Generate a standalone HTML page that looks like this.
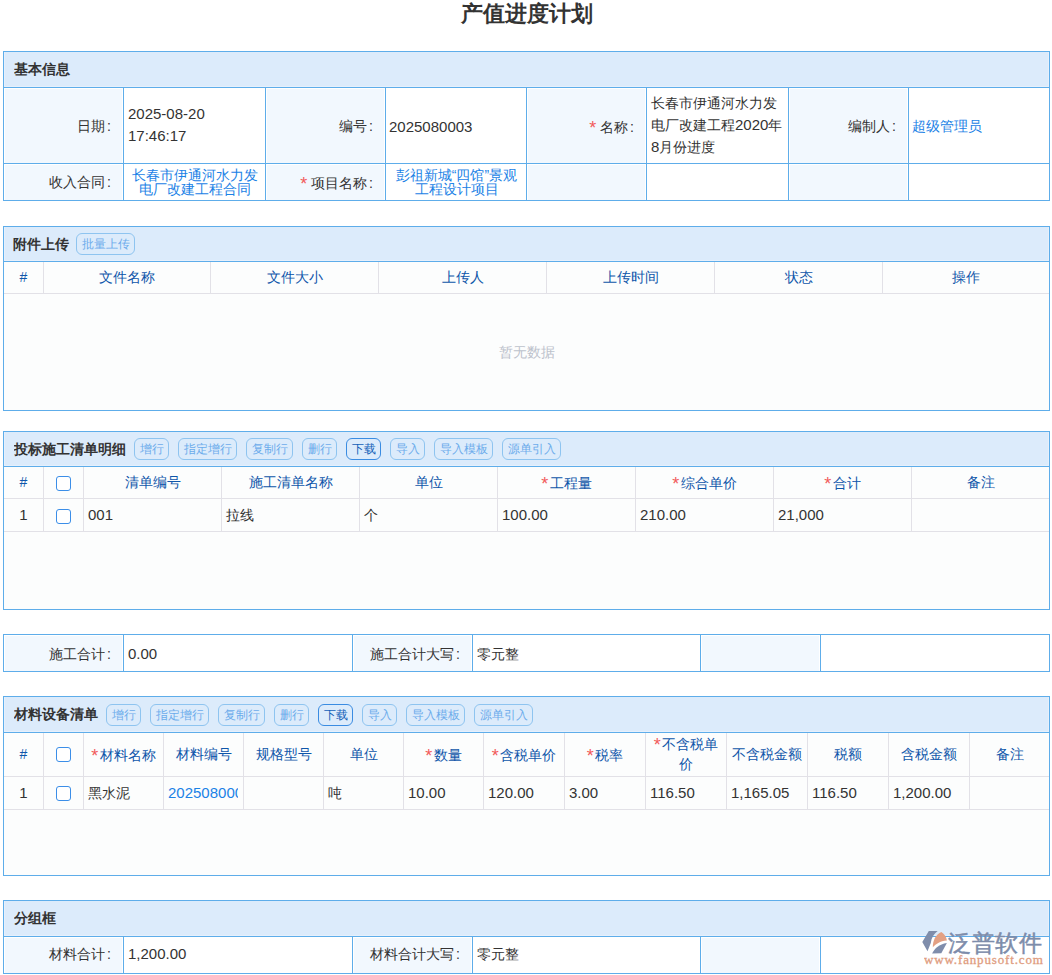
<!DOCTYPE html><html><head><meta charset="utf-8"><style>
html,body{margin:0;padding:0;background:#fff;width:1052px;height:975px;overflow:hidden;position:relative;font-family:"Liberation Sans",sans-serif;}
</style></head><body>
<div style="position:absolute;left:1px;top:0px;width:1052px;height:28px;line-height:28px;font-size:22px;color:#333;font-weight:bold;text-align:center;white-space:nowrap;overflow:hidden;">产值进度计划</div>
<div style="position:absolute;left:3px;top:51px;width:1047px;height:150px;background:#ffffff;box-sizing:border-box;border:1px solid #5eadea;"></div>
<div style="position:absolute;left:4px;top:52px;width:1045px;height:35px;background:#dcebfb;box-sizing:border-box;border:1px solid #e6f0fc;border-top:none;"></div>
<div style="position:absolute;left:3px;top:87px;width:1047px;height:1px;background:#5eadea;"></div>
<div style="position:absolute;left:14px;top:52px;width:200px;height:35px;line-height:35px;font-size:14px;color:#333333;font-weight:bold;text-align:left;white-space:nowrap;overflow:hidden;">基本信息</div>
<div style="position:absolute;left:5px;top:89px;width:117px;height:74px;background:#f2f8fe;"></div>
<div style="position:absolute;left:267px;top:89px;width:117px;height:74px;background:#f2f8fe;"></div>
<div style="position:absolute;left:528px;top:89px;width:117px;height:74px;background:#f2f8fe;"></div>
<div style="position:absolute;left:790px;top:89px;width:117px;height:74px;background:#f2f8fe;"></div>
<div style="position:absolute;left:5px;top:165px;width:117px;height:35px;background:#f2f8fe;"></div>
<div style="position:absolute;left:267px;top:165px;width:117px;height:35px;background:#f2f8fe;"></div>
<div style="position:absolute;left:528px;top:165px;width:117px;height:35px;background:#f2f8fe;"></div>
<div style="position:absolute;left:790px;top:165px;width:117px;height:35px;background:#f2f8fe;"></div>
<div style="position:absolute;left:3px;top:163px;width:1047px;height:1px;background:#5eadea;"></div>
<div style="position:absolute;left:123px;top:87px;width:1px;height:114px;background:#5eadea;"></div>
<div style="position:absolute;left:265px;top:87px;width:1px;height:114px;background:#5eadea;"></div>
<div style="position:absolute;left:385px;top:87px;width:1px;height:114px;background:#5eadea;"></div>
<div style="position:absolute;left:526px;top:87px;width:1px;height:114px;background:#5eadea;"></div>
<div style="position:absolute;left:646px;top:87px;width:1px;height:114px;background:#5eadea;"></div>
<div style="position:absolute;left:788px;top:87px;width:1px;height:114px;background:#5eadea;"></div>
<div style="position:absolute;left:908px;top:87px;width:1px;height:114px;background:#5eadea;"></div>
<div style="position:absolute;left:4px;top:89px;width:119px;height:75px;line-height:75px;font-size:14px;color:#333333;font-weight:normal;text-align:right;white-space:nowrap;overflow:hidden;box-sizing:border-box;padding-left:5px;padding-right:12px;">日期<span style="margin-left:2px">:</span></div>
<div style="position:absolute;left:124px;top:88px;width:141px;height:75px;line-height:75px;font-size:14px;color:#333333;font-weight:normal;text-align:left;white-space:nowrap;overflow:hidden;"><div style="position:absolute;top:15px;left:4px;line-height:22px"><span style="font-size:15px">2025-08-20<br>17:46:17</span></div></div>
<div style="position:absolute;left:266px;top:89px;width:119px;height:75px;line-height:75px;font-size:14px;color:#333333;font-weight:normal;text-align:right;white-space:nowrap;overflow:hidden;box-sizing:border-box;padding-left:5px;padding-right:12px;">编号<span style="margin-left:2px">:</span></div>
<div style="position:absolute;left:386px;top:89px;width:140px;height:75px;line-height:75px;font-size:14px;color:#333333;font-weight:normal;text-align:left;white-space:nowrap;overflow:hidden;box-sizing:border-box;padding-left:3px;padding-right:12px;"><span style="font-size:15px">2025080003</span></div>
<div style="position:absolute;left:527px;top:89px;width:119px;height:75px;line-height:75px;font-size:14px;color:#333333;font-weight:normal;text-align:right;white-space:nowrap;overflow:hidden;box-sizing:border-box;padding-left:5px;padding-right:12px;"><span style="color:#f25b5b;font-size:18px;position:relative;top:2px;margin-right:0px">*</span> 名称<span style="margin-left:2px">:</span></div>
<div style="position:absolute;left:647px;top:88px;width:141px;height:75px;line-height:75px;font-size:14px;color:#333333;font-weight:normal;text-align:left;white-space:nowrap;overflow:hidden;"><div style="position:absolute;top:4px;left:4px;line-height:22px">长春市伊通河水力发<br>电厂改建工程<span style="font-size:15px">2020</span>年<br><span style="font-size:15px">8</span>月份进度</div></div>
<div style="position:absolute;left:789px;top:89px;width:119px;height:75px;line-height:75px;font-size:14px;color:#333333;font-weight:normal;text-align:right;white-space:nowrap;overflow:hidden;box-sizing:border-box;padding-left:5px;padding-right:12px;">编制人<span style="margin-left:2px">:</span></div>
<div style="position:absolute;left:909px;top:89px;width:140px;height:75px;line-height:75px;font-size:14px;color:#1b82e6;font-weight:normal;text-align:left;white-space:nowrap;overflow:hidden;box-sizing:border-box;padding-left:3px;padding-right:12px;">超级管理员</div>
<div style="position:absolute;left:4px;top:164px;width:119px;height:36px;line-height:36px;font-size:14px;color:#333333;font-weight:normal;text-align:right;white-space:nowrap;overflow:hidden;box-sizing:border-box;padding-left:5px;padding-right:12px;">收入合同<span style="margin-left:2px">:</span></div>
<div style="position:absolute;left:124px;top:164px;width:141px;height:36px;line-height:36px;font-size:14px;color:#1b82e6;font-weight:normal;text-align:left;white-space:nowrap;overflow:hidden;"><div style="position:absolute;top:4px;left:0;width:141px;text-align:center;line-height:14px">长春市伊通河水力发<br>电厂改建工程合同</div></div>
<div style="position:absolute;left:266px;top:164px;width:119px;height:36px;line-height:36px;font-size:14px;color:#333333;font-weight:normal;text-align:right;white-space:nowrap;overflow:hidden;box-sizing:border-box;padding-left:5px;padding-right:12px;"><span style="color:#f25b5b;font-size:18px;position:relative;top:2px;margin-right:0px">*</span> 项目名称<span style="margin-left:2px">:</span></div>
<div style="position:absolute;left:386px;top:164px;width:141px;height:36px;line-height:36px;font-size:14px;color:#1b82e6;font-weight:normal;text-align:left;white-space:nowrap;overflow:hidden;"><div style="position:absolute;top:4px;left:0;width:141px;text-align:center;line-height:14px">彭祖新城“四馆”景观<br>工程设计项目</div></div>
<div style="position:absolute;left:3px;top:226px;width:1047px;height:185px;background:#ffffff;box-sizing:border-box;border:1px solid #5eadea;"></div>
<div style="position:absolute;left:4px;top:227px;width:1045px;height:34px;background:#dcebfb;box-sizing:border-box;border:1px solid #e6f0fc;border-top:none;"></div>
<div style="position:absolute;left:3px;top:261px;width:1047px;height:1px;background:#5eadea;"></div>
<div style="position:absolute;left:13px;top:227px;width:200px;height:34px;line-height:34px;font-size:14px;color:#333333;font-weight:bold;text-align:left;white-space:nowrap;overflow:hidden;">附件上传</div>
<div style="position:absolute;left:76px;top:233px;width:59px;height:22px;box-sizing:border-box;border:1px solid #8ec4f0;border-radius:6px;color:#6caceb;font-size:12px;line-height:20px;text-align:center;white-space:nowrap">批量上传</div>
<div style="position:absolute;left:4px;top:262px;width:1045px;height:148px;background:#fcfdfd;"></div>
<div style="position:absolute;left:4px;top:293px;width:1045px;height:1px;background:#e2e1e7;"></div>
<div style="position:absolute;left:43px;top:262px;width:1px;height:31px;background:#e2e1e7;"></div>
<div style="position:absolute;left:210px;top:262px;width:1px;height:31px;background:#e2e1e7;"></div>
<div style="position:absolute;left:378px;top:262px;width:1px;height:31px;background:#e2e1e7;"></div>
<div style="position:absolute;left:546px;top:262px;width:1px;height:31px;background:#e2e1e7;"></div>
<div style="position:absolute;left:714px;top:262px;width:1px;height:31px;background:#e2e1e7;"></div>
<div style="position:absolute;left:882px;top:262px;width:1px;height:31px;background:#e2e1e7;"></div>
<div style="position:absolute;left:4px;top:262px;width:39px;height:31px;line-height:31px;font-size:14px;color:#0f56aa;font-weight:normal;text-align:center;white-space:nowrap;overflow:hidden;box-sizing:border-box;padding-left:0px;padding-right:0px;">#</div>
<div style="position:absolute;left:44px;top:262px;width:166px;height:31px;line-height:31px;font-size:14px;color:#0f56aa;font-weight:normal;text-align:center;white-space:nowrap;overflow:hidden;box-sizing:border-box;padding-left:0px;padding-right:0px;">文件名称</div>
<div style="position:absolute;left:211px;top:262px;width:167px;height:31px;line-height:31px;font-size:14px;color:#0f56aa;font-weight:normal;text-align:center;white-space:nowrap;overflow:hidden;box-sizing:border-box;padding-left:0px;padding-right:0px;">文件大小</div>
<div style="position:absolute;left:379px;top:262px;width:167px;height:31px;line-height:31px;font-size:14px;color:#0f56aa;font-weight:normal;text-align:center;white-space:nowrap;overflow:hidden;box-sizing:border-box;padding-left:0px;padding-right:0px;">上传人</div>
<div style="position:absolute;left:547px;top:262px;width:167px;height:31px;line-height:31px;font-size:14px;color:#0f56aa;font-weight:normal;text-align:center;white-space:nowrap;overflow:hidden;box-sizing:border-box;padding-left:0px;padding-right:0px;">上传时间</div>
<div style="position:absolute;left:715px;top:262px;width:167px;height:31px;line-height:31px;font-size:14px;color:#0f56aa;font-weight:normal;text-align:center;white-space:nowrap;overflow:hidden;box-sizing:border-box;padding-left:0px;padding-right:0px;">状态</div>
<div style="position:absolute;left:883px;top:262px;width:166px;height:31px;line-height:31px;font-size:14px;color:#0f56aa;font-weight:normal;text-align:center;white-space:nowrap;overflow:hidden;box-sizing:border-box;padding-left:0px;padding-right:0px;">操作</div>
<div style="position:absolute;left:4px;top:294px;width:1045px;height:116px;line-height:116px;font-size:14px;color:#bcc2cc;font-weight:normal;text-align:center;white-space:nowrap;overflow:hidden;">暂无数据</div>
<div style="position:absolute;left:3px;top:431px;width:1047px;height:179px;background:#ffffff;box-sizing:border-box;border:1px solid #5eadea;"></div>
<div style="position:absolute;left:4px;top:432px;width:1045px;height:34px;background:#dcebfb;box-sizing:border-box;border:1px solid #e6f0fc;border-top:none;"></div>
<div style="position:absolute;left:3px;top:466px;width:1047px;height:1px;background:#5eadea;"></div>
<div style="position:absolute;left:14px;top:432px;width:200px;height:34px;line-height:34px;font-size:14px;color:#333333;font-weight:bold;text-align:left;white-space:nowrap;overflow:hidden;">投标施工清单明细</div>
<div style="position:absolute;left:134px;top:438px;width:35px;height:22px;box-sizing:border-box;border:1px solid #8ec4f0;border-radius:6px;color:#6caceb;font-size:12px;line-height:20px;text-align:center;white-space:nowrap">增行</div>
<div style="position:absolute;left:178px;top:438px;width:59px;height:22px;box-sizing:border-box;border:1px solid #8ec4f0;border-radius:6px;color:#6caceb;font-size:12px;line-height:20px;text-align:center;white-space:nowrap">指定增行</div>
<div style="position:absolute;left:246px;top:438px;width:47px;height:22px;box-sizing:border-box;border:1px solid #8ec4f0;border-radius:6px;color:#6caceb;font-size:12px;line-height:20px;text-align:center;white-space:nowrap">复制行</div>
<div style="position:absolute;left:302px;top:438px;width:35px;height:22px;box-sizing:border-box;border:1px solid #8ec4f0;border-radius:6px;color:#6caceb;font-size:12px;line-height:20px;text-align:center;white-space:nowrap">删行</div>
<div style="position:absolute;left:346px;top:438px;width:35px;height:22px;box-sizing:border-box;border:1px solid #3a8ce2;border-radius:6px;color:#135fb8;font-size:12px;line-height:20px;text-align:center;white-space:nowrap">下载</div>
<div style="position:absolute;left:390px;top:438px;width:35px;height:22px;box-sizing:border-box;border:1px solid #8ec4f0;border-radius:6px;color:#6caceb;font-size:12px;line-height:20px;text-align:center;white-space:nowrap">导入</div>
<div style="position:absolute;left:434px;top:438px;width:59px;height:22px;box-sizing:border-box;border:1px solid #8ec4f0;border-radius:6px;color:#6caceb;font-size:12px;line-height:20px;text-align:center;white-space:nowrap">导入模板</div>
<div style="position:absolute;left:502px;top:438px;width:59px;height:22px;box-sizing:border-box;border:1px solid #8ec4f0;border-radius:6px;color:#6caceb;font-size:12px;line-height:20px;text-align:center;white-space:nowrap">源单引入</div>
<div style="position:absolute;left:4px;top:467px;width:1045px;height:142px;background:#fcfdfd;"></div>
<div style="position:absolute;left:4px;top:498px;width:1045px;height:1px;background:#e2e1e7;"></div>
<div style="position:absolute;left:4px;top:531px;width:1045px;height:1px;background:#e2e1e7;"></div>
<div style="position:absolute;left:43px;top:467px;width:1px;height:64px;background:#e2e1e7;"></div>
<div style="position:absolute;left:83px;top:467px;width:1px;height:64px;background:#e2e1e7;"></div>
<div style="position:absolute;left:221px;top:467px;width:1px;height:64px;background:#e2e1e7;"></div>
<div style="position:absolute;left:359px;top:467px;width:1px;height:64px;background:#e2e1e7;"></div>
<div style="position:absolute;left:497px;top:467px;width:1px;height:64px;background:#e2e1e7;"></div>
<div style="position:absolute;left:635px;top:467px;width:1px;height:64px;background:#e2e1e7;"></div>
<div style="position:absolute;left:773px;top:467px;width:1px;height:64px;background:#e2e1e7;"></div>
<div style="position:absolute;left:911px;top:467px;width:1px;height:64px;background:#e2e1e7;"></div>
<div style="position:absolute;left:4px;top:467px;width:39px;height:31px;line-height:31px;font-size:14px;color:#0f56aa;font-weight:normal;text-align:center;white-space:nowrap;overflow:hidden;box-sizing:border-box;padding-left:0px;padding-right:0px;">#</div>
<div style="position:absolute;left:56px;top:476px;width:15px;height:15px;box-sizing:border-box;border:1.5px solid #3b8ee8;border-radius:3px;background:#fff"></div>
<div style="position:absolute;left:84px;top:467px;width:137px;height:31px;line-height:31px;font-size:14px;color:#0f56aa;font-weight:normal;text-align:center;white-space:nowrap;overflow:hidden;box-sizing:border-box;padding-left:0px;padding-right:0px;">清单编号</div>
<div style="position:absolute;left:222px;top:467px;width:137px;height:31px;line-height:31px;font-size:14px;color:#0f56aa;font-weight:normal;text-align:center;white-space:nowrap;overflow:hidden;box-sizing:border-box;padding-left:0px;padding-right:0px;">施工清单名称</div>
<div style="position:absolute;left:360px;top:467px;width:137px;height:31px;line-height:31px;font-size:14px;color:#0f56aa;font-weight:normal;text-align:center;white-space:nowrap;overflow:hidden;box-sizing:border-box;padding-left:0px;padding-right:0px;">单位</div>
<div style="position:absolute;left:498px;top:467px;width:137px;height:31px;line-height:31px;font-size:14px;color:#0f56aa;font-weight:normal;text-align:center;white-space:nowrap;overflow:hidden;box-sizing:border-box;padding-left:0px;padding-right:0px;"><span style="color:#f25b5b;font-size:18px;position:relative;top:2px;margin-right:1.5px">*</span>工程量</div>
<div style="position:absolute;left:636px;top:467px;width:137px;height:31px;line-height:31px;font-size:14px;color:#0f56aa;font-weight:normal;text-align:center;white-space:nowrap;overflow:hidden;box-sizing:border-box;padding-left:0px;padding-right:0px;"><span style="color:#f25b5b;font-size:18px;position:relative;top:2px;margin-right:1.5px">*</span>综合单价</div>
<div style="position:absolute;left:774px;top:467px;width:137px;height:31px;line-height:31px;font-size:14px;color:#0f56aa;font-weight:normal;text-align:center;white-space:nowrap;overflow:hidden;box-sizing:border-box;padding-left:0px;padding-right:0px;"><span style="color:#f25b5b;font-size:18px;position:relative;top:2px;margin-right:1.5px">*</span>合计</div>
<div style="position:absolute;left:912px;top:467px;width:137px;height:31px;line-height:31px;font-size:14px;color:#0f56aa;font-weight:normal;text-align:center;white-space:nowrap;overflow:hidden;box-sizing:border-box;padding-left:0px;padding-right:0px;">备注</div>
<div style="position:absolute;left:4px;top:499px;width:39px;height:32px;line-height:32px;font-size:14px;color:#333333;font-weight:normal;text-align:center;white-space:nowrap;overflow:hidden;box-sizing:border-box;padding-left:0px;padding-right:0px;"><span style="font-size:15px">1</span></div>
<div style="position:absolute;left:56px;top:509px;width:15px;height:15px;box-sizing:border-box;border:1.5px solid #3b8ee8;border-radius:3px;background:#fff"></div>
<div style="position:absolute;left:84px;top:499px;width:137px;height:32px;line-height:32px;font-size:14px;color:#333333;font-weight:normal;text-align:left;white-space:nowrap;overflow:hidden;box-sizing:border-box;padding-left:4px;padding-right:0px;"><span style="font-size:15px">001</span></div>
<div style="position:absolute;left:222px;top:499px;width:137px;height:32px;line-height:32px;font-size:14px;color:#333333;font-weight:normal;text-align:left;white-space:nowrap;overflow:hidden;box-sizing:border-box;padding-left:4px;padding-right:0px;">拉线</div>
<div style="position:absolute;left:360px;top:499px;width:137px;height:32px;line-height:32px;font-size:14px;color:#333333;font-weight:normal;text-align:left;white-space:nowrap;overflow:hidden;box-sizing:border-box;padding-left:4px;padding-right:0px;">个</div>
<div style="position:absolute;left:498px;top:499px;width:137px;height:32px;line-height:32px;font-size:14px;color:#333333;font-weight:normal;text-align:left;white-space:nowrap;overflow:hidden;box-sizing:border-box;padding-left:4px;padding-right:0px;"><span style="font-size:15px">100.00</span></div>
<div style="position:absolute;left:636px;top:499px;width:137px;height:32px;line-height:32px;font-size:14px;color:#333333;font-weight:normal;text-align:left;white-space:nowrap;overflow:hidden;box-sizing:border-box;padding-left:4px;padding-right:0px;"><span style="font-size:15px">210.00</span></div>
<div style="position:absolute;left:774px;top:499px;width:137px;height:32px;line-height:32px;font-size:14px;color:#333333;font-weight:normal;text-align:left;white-space:nowrap;overflow:hidden;box-sizing:border-box;padding-left:4px;padding-right:0px;"><span style="font-size:15px">21,000</span></div>
<div style="position:absolute;left:912px;top:499px;width:137px;height:32px;line-height:32px;font-size:14px;color:#333333;font-weight:normal;text-align:left;white-space:nowrap;overflow:hidden;box-sizing:border-box;padding-left:4px;padding-right:0px;"></div>
<div style="position:absolute;left:3px;top:634px;width:1047px;height:38px;background:#ffffff;box-sizing:border-box;border:1px solid #5eadea;"></div>
<div style="position:absolute;left:5px;top:636px;width:117px;height:35px;background:#f2f8fe;"></div>
<div style="position:absolute;left:354px;top:636px;width:117px;height:35px;background:#f2f8fe;"></div>
<div style="position:absolute;left:702px;top:636px;width:117px;height:35px;background:#f2f8fe;"></div>
<div style="position:absolute;left:123px;top:634px;width:1px;height:38px;background:#5eadea;"></div>
<div style="position:absolute;left:352px;top:634px;width:1px;height:38px;background:#5eadea;"></div>
<div style="position:absolute;left:472px;top:634px;width:1px;height:38px;background:#5eadea;"></div>
<div style="position:absolute;left:700px;top:634px;width:1px;height:38px;background:#5eadea;"></div>
<div style="position:absolute;left:820px;top:634px;width:1px;height:38px;background:#5eadea;"></div>
<div style="position:absolute;left:4px;top:636px;width:119px;height:36px;line-height:36px;font-size:14px;color:#333333;font-weight:normal;text-align:right;white-space:nowrap;overflow:hidden;box-sizing:border-box;padding-left:5px;padding-right:12px;">施工合计<span style="margin-left:2px">:</span></div>
<div style="position:absolute;left:124px;top:636px;width:228px;height:36px;line-height:36px;font-size:14px;color:#333333;font-weight:normal;text-align:left;white-space:nowrap;overflow:hidden;box-sizing:border-box;padding-left:4px;padding-right:12px;"><span style="font-size:15px">0.00</span></div>
<div style="position:absolute;left:353px;top:636px;width:119px;height:36px;line-height:36px;font-size:14px;color:#333333;font-weight:normal;text-align:right;white-space:nowrap;overflow:hidden;box-sizing:border-box;padding-left:5px;padding-right:12px;">施工合计大写<span style="margin-left:2px">:</span></div>
<div style="position:absolute;left:473px;top:636px;width:227px;height:36px;line-height:36px;font-size:14px;color:#333333;font-weight:normal;text-align:left;white-space:nowrap;overflow:hidden;box-sizing:border-box;padding-left:4px;padding-right:12px;">零元整</div>
<div style="position:absolute;left:3px;top:696px;width:1047px;height:180px;background:#ffffff;box-sizing:border-box;border:1px solid #5eadea;"></div>
<div style="position:absolute;left:4px;top:697px;width:1045px;height:35px;background:#dcebfb;box-sizing:border-box;border:1px solid #e6f0fc;border-top:none;"></div>
<div style="position:absolute;left:3px;top:732px;width:1047px;height:1px;background:#5eadea;"></div>
<div style="position:absolute;left:14px;top:697px;width:200px;height:35px;line-height:35px;font-size:14px;color:#333333;font-weight:bold;text-align:left;white-space:nowrap;overflow:hidden;">材料设备清单</div>
<div style="position:absolute;left:106px;top:704px;width:35px;height:22px;box-sizing:border-box;border:1px solid #8ec4f0;border-radius:6px;color:#6caceb;font-size:12px;line-height:20px;text-align:center;white-space:nowrap">增行</div>
<div style="position:absolute;left:150px;top:704px;width:59px;height:22px;box-sizing:border-box;border:1px solid #8ec4f0;border-radius:6px;color:#6caceb;font-size:12px;line-height:20px;text-align:center;white-space:nowrap">指定增行</div>
<div style="position:absolute;left:218px;top:704px;width:47px;height:22px;box-sizing:border-box;border:1px solid #8ec4f0;border-radius:6px;color:#6caceb;font-size:12px;line-height:20px;text-align:center;white-space:nowrap">复制行</div>
<div style="position:absolute;left:274px;top:704px;width:35px;height:22px;box-sizing:border-box;border:1px solid #8ec4f0;border-radius:6px;color:#6caceb;font-size:12px;line-height:20px;text-align:center;white-space:nowrap">删行</div>
<div style="position:absolute;left:318px;top:704px;width:35px;height:22px;box-sizing:border-box;border:1px solid #3a8ce2;border-radius:6px;color:#135fb8;font-size:12px;line-height:20px;text-align:center;white-space:nowrap">下载</div>
<div style="position:absolute;left:362px;top:704px;width:35px;height:22px;box-sizing:border-box;border:1px solid #8ec4f0;border-radius:6px;color:#6caceb;font-size:12px;line-height:20px;text-align:center;white-space:nowrap">导入</div>
<div style="position:absolute;left:406px;top:704px;width:59px;height:22px;box-sizing:border-box;border:1px solid #8ec4f0;border-radius:6px;color:#6caceb;font-size:12px;line-height:20px;text-align:center;white-space:nowrap">导入模板</div>
<div style="position:absolute;left:474px;top:704px;width:59px;height:22px;box-sizing:border-box;border:1px solid #8ec4f0;border-radius:6px;color:#6caceb;font-size:12px;line-height:20px;text-align:center;white-space:nowrap">源单引入</div>
<div style="position:absolute;left:4px;top:733px;width:1045px;height:142px;background:#fcfdfd;"></div>
<div style="position:absolute;left:4px;top:776px;width:1045px;height:1px;background:#e2e1e7;"></div>
<div style="position:absolute;left:4px;top:809px;width:1045px;height:1px;background:#e2e1e7;"></div>
<div style="position:absolute;left:43px;top:733px;width:1px;height:76px;background:#e2e1e7;"></div>
<div style="position:absolute;left:83px;top:733px;width:1px;height:76px;background:#e2e1e7;"></div>
<div style="position:absolute;left:163px;top:733px;width:1px;height:76px;background:#e2e1e7;"></div>
<div style="position:absolute;left:243px;top:733px;width:1px;height:76px;background:#e2e1e7;"></div>
<div style="position:absolute;left:323px;top:733px;width:1px;height:76px;background:#e2e1e7;"></div>
<div style="position:absolute;left:403px;top:733px;width:1px;height:76px;background:#e2e1e7;"></div>
<div style="position:absolute;left:483px;top:733px;width:1px;height:76px;background:#e2e1e7;"></div>
<div style="position:absolute;left:564px;top:733px;width:1px;height:76px;background:#e2e1e7;"></div>
<div style="position:absolute;left:645px;top:733px;width:1px;height:76px;background:#e2e1e7;"></div>
<div style="position:absolute;left:726px;top:733px;width:1px;height:76px;background:#e2e1e7;"></div>
<div style="position:absolute;left:807px;top:733px;width:1px;height:76px;background:#e2e1e7;"></div>
<div style="position:absolute;left:888px;top:733px;width:1px;height:76px;background:#e2e1e7;"></div>
<div style="position:absolute;left:969px;top:733px;width:1px;height:76px;background:#e2e1e7;"></div>
<div style="position:absolute;left:4px;top:733px;width:39px;height:43px;line-height:43px;font-size:14px;color:#0f56aa;font-weight:normal;text-align:center;white-space:nowrap;overflow:hidden;box-sizing:border-box;padding-left:0px;padding-right:0px;">#</div>
<div style="position:absolute;left:56px;top:747px;width:15px;height:15px;box-sizing:border-box;border:1.5px solid #3b8ee8;border-radius:3px;background:#fff"></div>
<div style="position:absolute;left:84px;top:733px;width:79px;height:43px;line-height:43px;font-size:14px;color:#0f56aa;font-weight:normal;text-align:center;white-space:nowrap;overflow:hidden;box-sizing:border-box;padding-left:0px;padding-right:0px;"><span style="color:#f25b5b;font-size:18px;position:relative;top:2px;margin-right:1.5px">*</span>材料名称</div>
<div style="position:absolute;left:164px;top:733px;width:79px;height:43px;line-height:43px;font-size:14px;color:#0f56aa;font-weight:normal;text-align:center;white-space:nowrap;overflow:hidden;box-sizing:border-box;padding-left:0px;padding-right:0px;">材料编号</div>
<div style="position:absolute;left:244px;top:733px;width:79px;height:43px;line-height:43px;font-size:14px;color:#0f56aa;font-weight:normal;text-align:center;white-space:nowrap;overflow:hidden;box-sizing:border-box;padding-left:0px;padding-right:0px;">规格型号</div>
<div style="position:absolute;left:324px;top:733px;width:79px;height:43px;line-height:43px;font-size:14px;color:#0f56aa;font-weight:normal;text-align:center;white-space:nowrap;overflow:hidden;box-sizing:border-box;padding-left:0px;padding-right:0px;">单位</div>
<div style="position:absolute;left:404px;top:733px;width:79px;height:43px;line-height:43px;font-size:14px;color:#0f56aa;font-weight:normal;text-align:center;white-space:nowrap;overflow:hidden;box-sizing:border-box;padding-left:0px;padding-right:0px;"><span style="color:#f25b5b;font-size:18px;position:relative;top:2px;margin-right:1.5px">*</span>数量</div>
<div style="position:absolute;left:484px;top:733px;width:80px;height:43px;line-height:43px;font-size:14px;color:#0f56aa;font-weight:normal;text-align:center;white-space:nowrap;overflow:hidden;box-sizing:border-box;padding-left:0px;padding-right:0px;"><span style="color:#f25b5b;font-size:18px;position:relative;top:2px;margin-right:1.5px">*</span>含税单价</div>
<div style="position:absolute;left:565px;top:733px;width:80px;height:43px;line-height:43px;font-size:14px;color:#0f56aa;font-weight:normal;text-align:center;white-space:nowrap;overflow:hidden;box-sizing:border-box;padding-left:0px;padding-right:0px;"><span style="color:#f25b5b;font-size:18px;position:relative;top:2px;margin-right:1.5px">*</span>税率</div>
<div style="position:absolute;left:646px;top:733px;width:80px;height:43px;line-height:43px;font-size:14px;color:#0f56aa;font-weight:normal;text-align:center;white-space:nowrap;overflow:hidden;box-sizing:border-box;padding-left:0px;padding-right:0px;"><div style="line-height:20px;white-space:normal;position:absolute;top:0px;left:4px;width:72px;text-align:center"><span style="color:#f25b5b;font-size:18px;position:relative;top:2px;margin-right:1.5px">*</span>不含税单<br>价</div></div>
<div style="position:absolute;left:727px;top:733px;width:80px;height:43px;line-height:43px;font-size:14px;color:#0f56aa;font-weight:normal;text-align:center;white-space:nowrap;overflow:hidden;box-sizing:border-box;padding-left:0px;padding-right:0px;">不含税金额</div>
<div style="position:absolute;left:808px;top:733px;width:80px;height:43px;line-height:43px;font-size:14px;color:#0f56aa;font-weight:normal;text-align:center;white-space:nowrap;overflow:hidden;box-sizing:border-box;padding-left:0px;padding-right:0px;">税额</div>
<div style="position:absolute;left:889px;top:733px;width:80px;height:43px;line-height:43px;font-size:14px;color:#0f56aa;font-weight:normal;text-align:center;white-space:nowrap;overflow:hidden;box-sizing:border-box;padding-left:0px;padding-right:0px;">含税金额</div>
<div style="position:absolute;left:970px;top:733px;width:79px;height:43px;line-height:43px;font-size:14px;color:#0f56aa;font-weight:normal;text-align:center;white-space:nowrap;overflow:hidden;box-sizing:border-box;padding-left:0px;padding-right:0px;">备注</div>
<div style="position:absolute;left:4px;top:777px;width:39px;height:32px;line-height:32px;font-size:14px;color:#333333;font-weight:normal;text-align:center;white-space:nowrap;overflow:hidden;box-sizing:border-box;padding-left:0px;padding-right:0px;"><span style="font-size:15px">1</span></div>
<div style="position:absolute;left:56px;top:786px;width:15px;height:15px;box-sizing:border-box;border:1.5px solid #3b8ee8;border-radius:3px;background:#fff"></div>
<div style="position:absolute;left:84px;top:777px;width:79px;height:32px;line-height:32px;font-size:14px;color:#333333;font-weight:normal;text-align:left;white-space:nowrap;overflow:hidden;box-sizing:border-box;padding-left:4px;padding-right:0px;">黑水泥</div>
<div style="position:absolute;left:164px;top:777px;width:79px;height:32px;line-height:32px;font-size:14px;color:#333333;font-weight:normal;text-align:left;white-space:nowrap;overflow:hidden;box-sizing:border-box;padding-left:4px;padding-right:0px;"><span style="color:#1b82e6;display:inline-block;width:70px;overflow:hidden;vertical-align:top"><span style="font-size:15px">2025080003</span></span></div>
<div style="position:absolute;left:244px;top:777px;width:79px;height:32px;line-height:32px;font-size:14px;color:#333333;font-weight:normal;text-align:left;white-space:nowrap;overflow:hidden;box-sizing:border-box;padding-left:4px;padding-right:0px;"></div>
<div style="position:absolute;left:324px;top:777px;width:79px;height:32px;line-height:32px;font-size:14px;color:#333333;font-weight:normal;text-align:left;white-space:nowrap;overflow:hidden;box-sizing:border-box;padding-left:4px;padding-right:0px;">吨</div>
<div style="position:absolute;left:404px;top:777px;width:79px;height:32px;line-height:32px;font-size:14px;color:#333333;font-weight:normal;text-align:left;white-space:nowrap;overflow:hidden;box-sizing:border-box;padding-left:4px;padding-right:0px;"><span style="font-size:15px">10.00</span></div>
<div style="position:absolute;left:484px;top:777px;width:80px;height:32px;line-height:32px;font-size:14px;color:#333333;font-weight:normal;text-align:left;white-space:nowrap;overflow:hidden;box-sizing:border-box;padding-left:4px;padding-right:0px;"><span style="font-size:15px">120.00</span></div>
<div style="position:absolute;left:565px;top:777px;width:80px;height:32px;line-height:32px;font-size:14px;color:#333333;font-weight:normal;text-align:left;white-space:nowrap;overflow:hidden;box-sizing:border-box;padding-left:4px;padding-right:0px;"><span style="font-size:15px">3.00</span></div>
<div style="position:absolute;left:646px;top:777px;width:80px;height:32px;line-height:32px;font-size:14px;color:#333333;font-weight:normal;text-align:left;white-space:nowrap;overflow:hidden;box-sizing:border-box;padding-left:4px;padding-right:0px;"><span style="font-size:15px">116.50</span></div>
<div style="position:absolute;left:727px;top:777px;width:80px;height:32px;line-height:32px;font-size:14px;color:#333333;font-weight:normal;text-align:left;white-space:nowrap;overflow:hidden;box-sizing:border-box;padding-left:4px;padding-right:0px;"><span style="font-size:15px">1,165.05</span></div>
<div style="position:absolute;left:808px;top:777px;width:80px;height:32px;line-height:32px;font-size:14px;color:#333333;font-weight:normal;text-align:left;white-space:nowrap;overflow:hidden;box-sizing:border-box;padding-left:4px;padding-right:0px;"><span style="font-size:15px">116.50</span></div>
<div style="position:absolute;left:889px;top:777px;width:80px;height:32px;line-height:32px;font-size:14px;color:#333333;font-weight:normal;text-align:left;white-space:nowrap;overflow:hidden;box-sizing:border-box;padding-left:4px;padding-right:0px;"><span style="font-size:15px">1,200.00</span></div>
<div style="position:absolute;left:970px;top:777px;width:79px;height:32px;line-height:32px;font-size:14px;color:#333333;font-weight:normal;text-align:left;white-space:nowrap;overflow:hidden;box-sizing:border-box;padding-left:4px;padding-right:0px;"></div>
<div style="position:absolute;left:3px;top:900px;width:1047px;height:74px;background:#ffffff;box-sizing:border-box;border:1px solid #5eadea;"></div>
<div style="position:absolute;left:4px;top:901px;width:1045px;height:35px;background:#dcebfb;box-sizing:border-box;border:1px solid #e6f0fc;border-top:none;"></div>
<div style="position:absolute;left:3px;top:936px;width:1047px;height:1px;background:#5eadea;"></div>
<div style="position:absolute;left:14px;top:901px;width:200px;height:35px;line-height:35px;font-size:14px;color:#333333;font-weight:bold;text-align:left;white-space:nowrap;overflow:hidden;">分组框</div>
<div style="position:absolute;left:5px;top:938px;width:117px;height:35px;background:#f2f8fe;"></div>
<div style="position:absolute;left:354px;top:938px;width:117px;height:35px;background:#f2f8fe;"></div>
<div style="position:absolute;left:702px;top:938px;width:117px;height:35px;background:#f2f8fe;"></div>
<div style="position:absolute;left:123px;top:936px;width:1px;height:38px;background:#5eadea;"></div>
<div style="position:absolute;left:352px;top:936px;width:1px;height:38px;background:#5eadea;"></div>
<div style="position:absolute;left:472px;top:936px;width:1px;height:38px;background:#5eadea;"></div>
<div style="position:absolute;left:700px;top:936px;width:1px;height:38px;background:#5eadea;"></div>
<div style="position:absolute;left:820px;top:936px;width:1px;height:38px;background:#5eadea;"></div>
<div style="position:absolute;left:4px;top:936px;width:119px;height:36px;line-height:36px;font-size:14px;color:#333333;font-weight:normal;text-align:right;white-space:nowrap;overflow:hidden;box-sizing:border-box;padding-left:5px;padding-right:12px;">材料合计<span style="margin-left:2px">:</span></div>
<div style="position:absolute;left:124px;top:936px;width:228px;height:36px;line-height:36px;font-size:14px;color:#333333;font-weight:normal;text-align:left;white-space:nowrap;overflow:hidden;box-sizing:border-box;padding-left:4px;padding-right:12px;"><span style="font-size:15px">1,200.00</span></div>
<div style="position:absolute;left:353px;top:936px;width:119px;height:36px;line-height:36px;font-size:14px;color:#333333;font-weight:normal;text-align:right;white-space:nowrap;overflow:hidden;box-sizing:border-box;padding-left:5px;padding-right:12px;">材料合计大写<span style="margin-left:2px">:</span></div>
<div style="position:absolute;left:473px;top:936px;width:227px;height:36px;line-height:36px;font-size:14px;color:#333333;font-weight:normal;text-align:left;white-space:nowrap;overflow:hidden;box-sizing:border-box;padding-left:4px;padding-right:12px;">零元整</div>
<svg style="position:absolute;left:918px;top:926px" width="34" height="32" viewBox="0 0 34 32">
<path d="M10.8,5.1 L19.7,5.1 C15.5,8 13.5,12 12.8,17 L9.5,25.3 L4.3,16.1 Z" fill="#7f8dab"/>
<path d="M14.8,21.3 C15,15 17,9 23.3,6.1 C26,8 28.5,11 28.9,14.4 C22,15 17.5,18 14.8,21.3 Z" fill="#e3a083"/>
<path d="M14.1,27.6 C17,22 21,18.5 28.9,17.1 L23.3,27.2 Z" fill="#7f8dab"/>
</svg>
<div style="position:absolute;left:948px;top:928px;width:104px;height:30px;line-height:30px;font-size:23px;color:#7d8caa;font-weight:normal;text-align:left;white-space:nowrap;overflow:hidden;letter-spacing:0.5px;-webkit-text-stroke:0.5px #7d8caa;">泛普软件</div>
<div style="position:absolute;left:924px;top:951px;width:129px;height:18px;line-height:18px;font-size:13px;color:#e09c7e;font-weight:normal;text-align:left;white-space:nowrap;overflow:hidden;font-family:'Liberation Serif',serif;letter-spacing:0.85px;-webkit-text-stroke:0.3px #e09c7e;">www.fanpusoft.com</div>
</body></html>
